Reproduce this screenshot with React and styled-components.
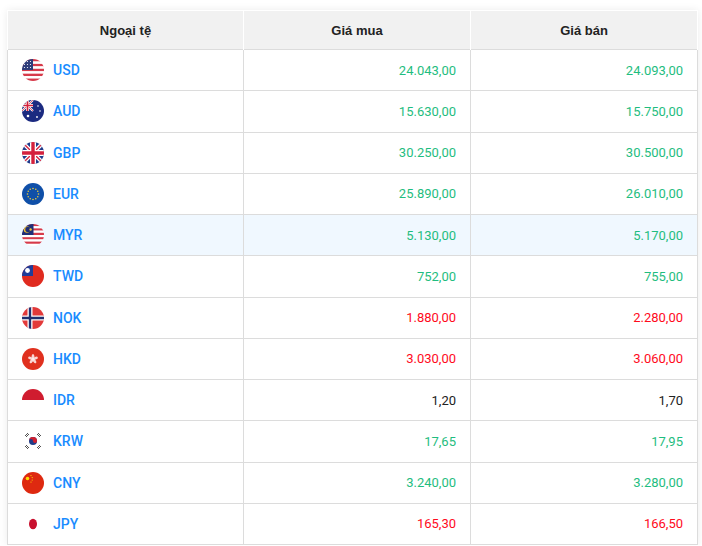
import styled, { createGlobalStyle } from 'styled-components';

const GlobalStyle = createGlobalStyle`
    body {
        margin: 0;
        background: #ffffff;
        font-family: Roboto, "Liberation Sans", Arial, sans-serif;
    }
`

const Wrap = styled.div`
    padding: 10px 5px 0 7px;
`

const Table = styled.table`
    width: 690px;
    border-collapse: collapse;
    table-layout: fixed;
    box-shadow: 0 0 8px rgba(0, 0, 0, 0.08);
    font-size: 13px;
`

const Th = styled.th`
    height: 38px;
    padding: 0;
    background: #f1f1f1;
    color: #222;
    font-family: "Liberation Sans", Arial, sans-serif;
    font-size: 13px;
    font-weight: bold;
    text-align: center;
    border: 1px solid #fff;
    border-bottom: none;
`

const Row = styled.tr`
    background: ${p => (p.$active ? '#f0f8ff' : '#fff')};
`

const Td = styled.td`
    height: 40.25px;
    padding: 0 14px;
    border: 1px solid #dcdcdc;
    text-align: ${p => (p.$right ? 'right' : 'left')};
    color: ${p => p.$color || '#222'};
`

const Currency = styled.div`
    display: flex;
    align-items: center;
    gap: 9px;
    color: #1a8cff;
    font-size: 14px;
    font-weight: 500;
`

const colors = {
    up: '#1fbd80',
    down: '#ff0a1c',
    same: '#222222',
}

const Flag = ({ children, id }) => (
    <svg width="22" height="22" viewBox="0 0 22 22">
        <defs>
            <clipPath id={'c' + id}>
                <circle cx="11" cy="11" r="11" />
            </clipPath>
        </defs>
        <g clipPath={`url(#c${id})`}>{children}</g>
    </svg>
)

const Stripes = ({ a, b, n }) => {
    const h = 22 / n
    return Array.from({ length: n }, (_, i) => (
        <rect key={i} x="0" y={i * h} width="22" height={h + 0.1} fill={i % 2 ? b : a} />
    ))
}

const Jack = () => (
    <g>
        <rect width="22" height="22" fill="#1f3a8a" />
        <path d="M0 0L22 22M22 0L0 22" stroke="#fff" strokeWidth="4" />
        <path d="M0 0L22 22M22 0L0 22" stroke="#d4213d" strokeWidth="1.4" />
        <path d="M11 0V22M0 11H22" stroke="#fff" strokeWidth="6" />
        <path d="M11 0V22M0 11H22" stroke="#d4213d" strokeWidth="3.4" />
    </g>
)

const flags = {
    USD: (
        <Flag id="usd">
            <Stripes a="#d73a4a" b="#fff" n={9} />
            <rect width="11" height="11" fill="#2f3d7a" />
            {[2, 5, 8].map(y => [2, 5, 8].map(x => <circle key={x + '-' + y} cx={x + 0.5} cy={y + 0.5} r="0.6" fill="#fff" />))}
        </Flag>
    ),
    AUD: (
        <Flag id="aud">
            <rect width="22" height="22" fill="#1b2a80" />
            <g transform="scale(0.5)">
                <Jack />
            </g>
            <circle cx="6" cy="16" r="1.3" fill="#fff" />
            <circle cx="16" cy="6" r="0.8" fill="#fff" />
            <circle cx="18" cy="11" r="0.8" fill="#fff" />
            <circle cx="15" cy="17" r="0.9" fill="#fff" />
        </Flag>
    ),
    GBP: (
        <Flag id="gbp">
            <Jack />
        </Flag>
    ),
    EUR: (
        <Flag id="eur">
            <rect width="22" height="22" fill="#0f4fa8" />
            {Array.from({ length: 12 }, (_, i) => {
                const a = (i / 12) * Math.PI * 2
                return <circle key={i} cx={11 + Math.cos(a) * 5.5} cy={11 + Math.sin(a) * 5.5} r="0.8" fill="#e8c83a" />
            })}
        </Flag>
    ),
    MYR: (
        <Flag id="myr">
            <Stripes a="#d73a4a" b="#fff" n={10} />
            <rect width="11.5" height="11" fill="#1f2f78" />
            <circle cx="5" cy="5.5" r="3.2" fill="#f2c230" />
            <circle cx="6" cy="5.5" r="2.7" fill="#1f2f78" />
            <circle cx="8.6" cy="5.5" r="1.2" fill="#f2c230" />
        </Flag>
    ),
    TWD: (
        <Flag id="twd">
            <rect width="22" height="22" fill="#e02b1f" />
            <rect width="11" height="11" fill="#1f3d99" />
            <circle cx="5.5" cy="5.5" r="2.4" fill="#fff" />
        </Flag>
    ),
    NOK: (
        <Flag id="nok">
            <rect width="22" height="22" fill="#e23a3a" />
            <path d="M8 0V22M0 11H22" stroke="#fff" strokeWidth="5" />
            <path d="M8 0V22M0 11H22" stroke="#1f2f6e" strokeWidth="2.4" />
        </Flag>
    ),
    HKD: (
        <Flag id="hkd">
            <rect width="22" height="22" fill="#e0301e" />
            {[0, 72, 144, 216, 288].map(r => (
                <ellipse key={r} cx="11" cy="8.5" rx="1.4" ry="2.6" fill="#fff" opacity="0.8" transform={`rotate(${r} 11 11)`} />
            ))}
        </Flag>
    ),
    IDR: (
        <Flag id="idr">
            <rect width="22" height="11" fill="#d01c2f" />
            <rect y="11" width="22" height="11" fill="#fff" />
        </Flag>
    ),
    KRW: (
        <Flag id="krw">
            <rect width="22" height="22" fill="#fff" />
            <circle cx="11" cy="11" r="4" fill="#1f3d8a" />
            <path d="M7 11A4 4 0 0 1 15 11A2 2 0 0 1 11 11A2 2 0 0 0 7 11Z" fill="#d0202f" />
            <g stroke="#555" strokeWidth="1">
                <path d="M3 6L6 3M4 7L7 4" />
                <path d="M16 3L19 6M15 4L18 7" />
                <path d="M3 16L6 19M4 15L7 18" />
                <path d="M16 19L19 16M15 18L18 15" />
            </g>
        </Flag>
    ),
    CNY: (
        <Flag id="cny">
            <rect width="22" height="22" fill="#de2910" />
            <circle cx="5.5" cy="6.5" r="1.8" fill="#ffde00" />
            <circle cx="9" cy="3.6" r="0.6" fill="#ffde00" />
            <circle cx="10.2" cy="5.6" r="0.6" fill="#ffde00" />
            <circle cx="10.2" cy="8" r="0.6" fill="#ffde00" />
            <circle cx="9" cy="10" r="0.6" fill="#ffde00" />
        </Flag>
    ),
    JPY: (
        <Flag id="jpy">
            <rect width="22" height="22" fill="#fff" />
            <ellipse cx="11" cy="11" rx="4" ry="5.2" fill="#c8102e" />
        </Flag>
    ),
}

const data = [
    ['USD', '24.043,00', '24.093,00', 'up'],
    ['AUD', '15.630,00', '15.750,00', 'up'],
    ['GBP', '30.250,00', '30.500,00', 'up'],
    ['EUR', '25.890,00', '26.010,00', 'up'],
    ['MYR', '5.130,00', '5.170,00', 'up', true],
    ['TWD', '752,00', '755,00', 'up'],
    ['NOK', '1.880,00', '2.280,00', 'down'],
    ['HKD', '3.030,00', '3.060,00', 'down'],
    ['IDR', '1,20', '1,70', 'same'],
    ['KRW', '17,65', '17,95', 'up'],
    ['CNY', '3.240,00', '3.280,00', 'up'],
    ['JPY', '165,30', '166,50', 'down'],
]

const App = () => {
    return (
        <Wrap>
            <GlobalStyle />
            <Table>
                <colgroup>
                    <col style={{ width: '236px' }} />
                    <col style={{ width: '227px' }} />
                    <col style={{ width: '227px' }} />
                </colgroup>
                <thead>
                    <tr>
                        <Th>Ngoại tệ</Th>
                        <Th>Giá mua</Th>
                        <Th>Giá bán</Th>
                    </tr>
                </thead>
                <tbody>
                    {data.map(([code, buy, sell, trend, active]) => (
                        <Row key={code} $active={active}>
                            <Td>
                                <Currency>
                                    {flags[code]}
                                    {code}
                                </Currency>
                            </Td>
                            <Td $right $color={colors[trend]}>{buy}</Td>
                            <Td $right $color={colors[trend]}>{sell}</Td>
                        </Row>
                    ))}
                </tbody>
            </Table>
        </Wrap>
    );
}

export default App;
